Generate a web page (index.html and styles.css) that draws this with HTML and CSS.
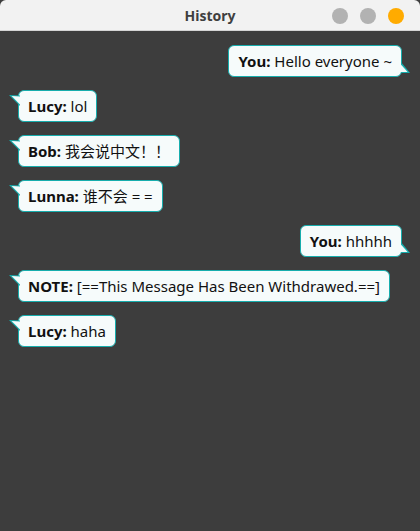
FILE: index.html
```html
<!DOCTYPE html>
<html>
<head>
<meta charset="utf-8">
<link rel="stylesheet" href="styles.css">
</head>
<body>
<div class="window">
  <div class="titlebar">
    <span class="title">History</span>
    <div class="controls">
      <span class="dot"></span>
      <span class="dot"></span>
      <span class="dot dot-active"></span>
    </div>
  </div>
  <div class="messages">
    <div class="row row-self"><div class="bubble bubble-self"><b>You:</b> Hello everyone ~</div></div>
    <div class="row"><div class="bubble"><b>Lucy:</b> lol</div></div>
    <div class="row"><div class="bubble"><b>Bob:</b> 我会说中文！！</div></div>
    <div class="row"><div class="bubble"><b>Lunna:</b> 谁不会 = =</div></div>
    <div class="row row-self"><div class="bubble bubble-self"><b>You:</b> hhhhh</div></div>
    <div class="row"><div class="bubble"><b>NOTE:</b> [==This Message Has Been Withdrawed.==]</div></div>
    <div class="row"><div class="bubble"><b>Lucy:</b> haha</div></div>
  </div>
</div>
</body>
</html>
```
FILE: styles.css
```css
html, body {
  margin: 0;
  padding: 0;
  height: 100%;
}
body {
  font-family: "Noto Sans", "Noto Sans CJK SC", sans-serif;
  background: #3d3d3d;
}
.window {
  display: flex;
  flex-direction: column;
  height: 100%;
}
.titlebar {
  height: 30px;
  flex: none;
  background: #f2f2f2;
  border-bottom: 1px solid #d4d4d4;
  border-radius: 6px 6px 0 0;
  display: flex;
  align-items: center;
  justify-content: center;
  position: relative;
}
.title {
  font-weight: bold;
  font-size: 14px;
  color: #3f3f3f;
}
.controls {
  position: absolute;
  right: 16px;
  top: 8px;
  display: flex;
  gap: 12px;
}
.dot {
  width: 16px;
  height: 16px;
  border-radius: 50%;
  background: #b2b2b2;
}
.dot-active {
  background: #ffab00;
}
.messages {
  flex: 1;
  background: #3d3d3d;
  padding: 14px 18px;
  display: flex;
  flex-direction: column;
  gap: 13px;
}
.row {
  display: flex;
  justify-content: flex-start;
}
.row-self {
  justify-content: flex-end;
}
.bubble {
  position: relative;
  height: 30px;
  line-height: 30px;
  padding: 0 9px;
  background: #f6fbfb;
  border: 1px solid #16adad;
  border-radius: 6px;
  font-size: 15px;
  color: #111;
  white-space: nowrap;
}
.bubble b {
  font-weight: bold;
}
.bubble::before,
.bubble::after {
  content: "";
  position: absolute;
  width: 12px;
  height: 12px;
  left: -10px;
  top: 3px;
}
.bubble::before {
  background: #16adad;
  clip-path: polygon(0px 1px, 11px 1.5px, 11px 12px);
}
.bubble::after {
  background: #f6fbfb;
  clip-path: polygon(2.6px 2px, 11px 2.6px, 11px 10.4px);
}
.bubble-self::before,
.bubble-self::after {
  left: auto;
  top: auto;
  right: -9px;
  bottom: 3px;
}
.bubble-self::before {
  clip-path: polygon(3px 1px, 12px 12px, 3px 12px);
}
.bubble-self::after {
  clip-path: polygon(2px 2.6px, 9.6px 11px, 2px 11px);
}
```
